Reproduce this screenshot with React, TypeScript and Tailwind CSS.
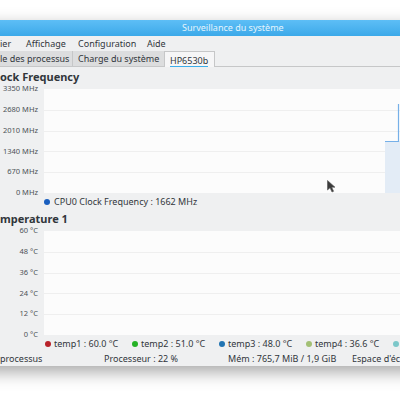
const grid = [0.2, 0.4, 0.6, 0.8];

function Chart({ labels, plot }: { labels: string[]; plot?: boolean }) {
  return (
    <div className="flex">
      <div className="w-[44px] h-[104px] flex flex-col justify-between shrink-0">
        {labels.map((l) => (
          <div key={l} className="h-0 flex items-center justify-end pr-[6px] text-[7.5px] leading-none whitespace-nowrap text-[#4d5257]">
            {l}
          </div>
        ))}
      </div>
      <div className="flex-1 h-[104px] bg-[#fcfcfc]">
        <svg width="386" height="104" viewBox="0 0 386 104">
          {grid.map((g) => (
            <line key={g} x1="0" x2="386" y1={Math.round(104 * g) + 0.5} y2={Math.round(104 * g) + 0.5} stroke="#efefef" strokeWidth="1" />
          ))}
          {plot && (
            <>
              <rect x="341" y="52" width="45" height="52" fill="#e3ecf6" />
              <path d="M341 52.5 H354.5 V15" fill="none" stroke="#76b0e8" strokeWidth="1.2" />
            </>
          )}
        </svg>
      </div>
    </div>
  );
}

function Dot({ color }: { color: string }) {
  return <span className={`inline-block w-[6px] h-[6px] rounded-full mr-[3px] shrink-0 ${color}`} />;
}

export default function App() {
  const temps = [
    { c: 'bg-[#b8232a]', t: 'temp1 : 60.0 °C' },
    { c: 'bg-[#25b226]', t: 'temp2 : 51.0 °C' },
    { c: 'bg-[#2274b2]', t: 'temp3 : 48.0 °C' },
    { c: 'bg-[#a3c075]', t: 'temp4 : 36.6 °C' },
    { c: 'bg-[#7cc7c9]', t: 'temp5 : 36.0 °C' },
  ];

  return (
    <div className="relative w-[400px] h-[400px] overflow-hidden bg-white font-['Noto_Sans',sans-serif] text-[#31363b]">
      <div className="pt-[20px]">
        {/* window, wider than the view on both sides */}
        <div className="-ml-[30px] w-[460px] bg-[#eff0f1] shadow-[0_6px_16px_rgba(0,0,0,0.35)]">
          <div className="ml-[30px]">
            {/* title bar */}
            <div className="h-[16px] bg-linear-to-b from-[#5dbef6] to-[#3ba9e9] flex items-center pl-[182px] text-[9px] text-[#e4f4fd] whitespace-nowrap">
              Surveillance du système
            </div>

            {/* menu */}
            <div className="h-[15px] flex items-center text-[9px] whitespace-nowrap">
              <span className="w-[26px]">ier</span>
              <span className="w-[52px]">Affichage</span>
              <span className="w-[69px]">Configuration</span>
              <span>Aide</span>
            </div>

            {/* tabs */}
            <div className="h-[16px] flex border-b border-[#c6c7c8] text-[9px] whitespace-nowrap">
              <div className="w-[73px] bg-[#dcddde] border-r border-[#c6c7c8] flex items-center">le des processus</div>
              <div className="w-[92px] bg-[#dcddde] border-r border-[#c6c7c8] flex items-center pl-[5px]">Charge du système</div>
              <div className="w-[50px] bg-[#f6f6f7] border-r border-t border-[#c6c7c8] -mb-px flex items-center pl-[5px]">
                <span className="border-b border-[#3daee9] leading-[11px] mt-[2px]">HP6530b</span>
              </div>
            </div>

            {/* clock frequency */}
            <div className="h-[22px] pt-[4px] text-[11px] leading-[12px] font-bold whitespace-nowrap">ock Frequency</div>
            <Chart labels={['3350 MHz', '2680 MHz', '2010 MHz', '1340 MHz', '670 MHz', '0 MHz']} plot />
            <div className="h-[18px] flex items-center pl-[44px] text-[9px] whitespace-nowrap">
              <Dot color="bg-[#1a5fbf]" />
              <span className="ml-[1px]">CPU0 Clock Frequency : 1662 MHz</span>
            </div>

            {/* temperature */}
            <div className="h-[20px] pt-[2px] text-[11px] leading-[12px] font-bold whitespace-nowrap">mperature 1</div>
            <Chart labels={['60 °C', '48 °C', '36 °C', '24 °C', '12 °C', '0 °C']} />
            <div className="h-[17px] flex items-center pl-[45px] text-[9px] whitespace-nowrap">
              {temps.map((t) => (
                <div key={t.t} className="w-[87px] shrink-0 flex items-center">
                  <Dot color={t.c} />
                  <span>{t.t}</span>
                </div>
              ))}
            </div>

            {/* status bar */}
            <div className="h-[14px] flex items-center text-[9px] whitespace-nowrap">
              <span className="w-[104px] shrink-0">processus</span>
              <span className="w-[124px] shrink-0">Processeur : 22 %</span>
              <span className="w-[124px] shrink-0">Mém : 765,7 MiB / 1,9 GiB</span>
              <span>Espace d'échange : 0 B / 2,0 GiB</span>
            </div>
          </div>
        </div>
      </div>

      {/* mouse pointer */}
      <svg className="absolute left-[327px] top-[180px]" width="10" height="13" viewBox="0 0 10 13">
        <path d="M0.5 0.5 L0.5 10 L3 7.8 L5 12 L6.6 11.3 L4.7 7.2 L8 7.2 Z" fill="#3b3b3b" stroke="#555" strokeWidth="0.6" />
      </svg>
    </div>
  );
}
